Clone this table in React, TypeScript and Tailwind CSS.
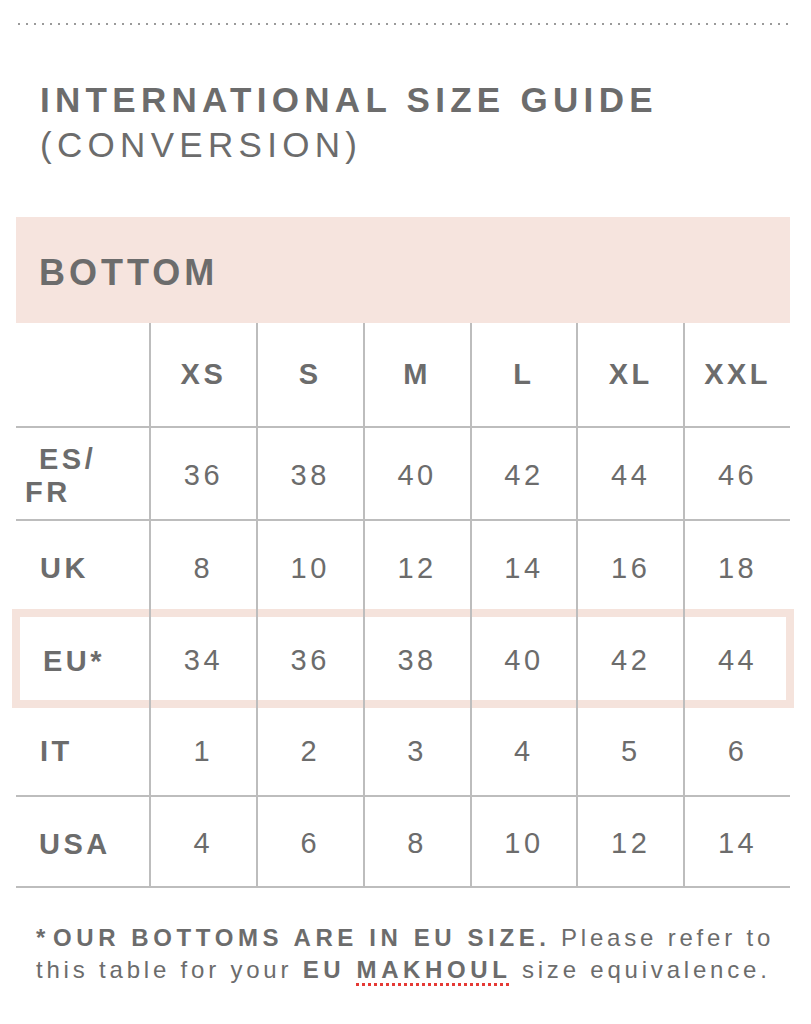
const sizes = ["XS", "S", "M", "L", "XL", "XXL"];

const rows = [
  { key: "esfr", values: ["36", "38", "40", "42", "44", "46"], height: "h-[93px]", line: true },
  { key: "uk", values: ["8", "10", "12", "14", "16", "18"], height: "h-[92px]", line: false },
  { key: "eu", values: ["34", "36", "38", "40", "42", "44"], height: "h-[91px]", line: false },
  { key: "it", values: ["1", "2", "3", "4", "5", "6"], height: "h-[93px]", line: true },
  { key: "usa", values: ["4", "6", "8", "10", "12", "14"], height: "h-[91px]", line: true },
];

const RowLabel = ({ id }: { id: string }) => {
  switch (id) {
    case "esfr":
      return (
        <div className="pt-[5px] font-bold leading-[33px]">
          <div className="pl-[23px]">ES/</div>
          <div className="pl-[9px]">FR</div>
        </div>
      );
    case "uk":
      return <div className="pl-[24px] pt-[2px] font-bold">UK</div>;
    case "eu":
      return <div className="pl-[27px] pt-[5px] font-bold">EU*</div>;
    case "it":
      return <div className="pl-[24px] pt-[3px] font-bold">IT</div>;
    default:
      return <div className="pl-[23px] pt-[5px] font-bold">USA</div>;
  }
};

export default function App() {
  return (
    <div className="min-h-screen bg-white font-['Liberation_Sans',Arial,sans-serif] text-[#6c6c6c]">
      {/* dotted rule */}
      <div className="pt-[23px]">
        <div className="ml-[18px] mr-[21px] h-[2px] bg-[linear-gradient(to_right,#9a9a9a_2px,transparent_2px)] bg-[length:8px_2px]" />
      </div>

      {/* title */}
      <div className="mt-[52px] pl-[40px] text-[35px] leading-[45px] tracking-[5.3px]">
        <div className="font-bold">INTERNATIONAL SIZE GUIDE</div>
        <div>(CONVERSION)</div>
      </div>

      {/* section header */}
      <div className="ml-[16px] mr-[21px] mt-[50px] flex h-[106px] items-center bg-[#f6e4de] pl-[23px] pt-[5px]">
        <span className="text-[36px] font-bold leading-none tracking-[4px]">BOTTOM</span>
      </div>

      {/* table */}
      <div className="relative isolate ml-[16px] mr-[21px] text-[29px] leading-none tracking-[3.5px]">
        <div className="grid h-[105px] grid-cols-[133px_repeat(6,1fr)] border-b-2 border-[#bdbdbd]">
          <div />
          {sizes.map((s) => (
            <div key={s} className="flex items-center justify-center border-l-2 border-[#bdbdbd] font-bold">
              {s}
            </div>
          ))}
        </div>

        {rows.map((row) => (
          <div
            key={row.key}
            className={`relative grid grid-cols-[133px_repeat(6,1fr)] ${row.height} ${row.line ? "border-b-2 border-[#bdbdbd]" : ""}`}
          >
            {row.key === "eu" && (
              <div className="absolute -inset-x-[4px] -inset-y-[4px] -z-10 border-[8px] border-[#f5e3dc]" />
            )}
            <div className="flex items-center">
              <RowLabel id={row.key} />
            </div>
            {row.values.map((v, i) => (
              <div key={i} className="flex items-center justify-center border-l-2 border-[#bdbdbd] pt-[3px]">
                {v}
              </div>
            ))}
          </div>
        ))}
      </div>

      {/* footnote */}
      <div className="mt-[34px] pl-[36px] text-[24px] leading-[32px] tracking-[3.8px]">
        <span className="font-bold tracking-[4.6px]">
          <span className="mr-[3px]">*</span>OUR BOTTOMS ARE IN EU SIZE.
        </span>{" "}
        Please refer to
        <br />
        this table for your{" "}
        <span className="font-bold tracking-[4.6px]">
          EU{" "}
          <span className="underline decoration-[#e53935] decoration-dotted decoration-[3px] underline-offset-[5px]">MAKHOUL</span>
        </span>{" "}
        size equivalence.
      </div>
    </div>
  );
}
